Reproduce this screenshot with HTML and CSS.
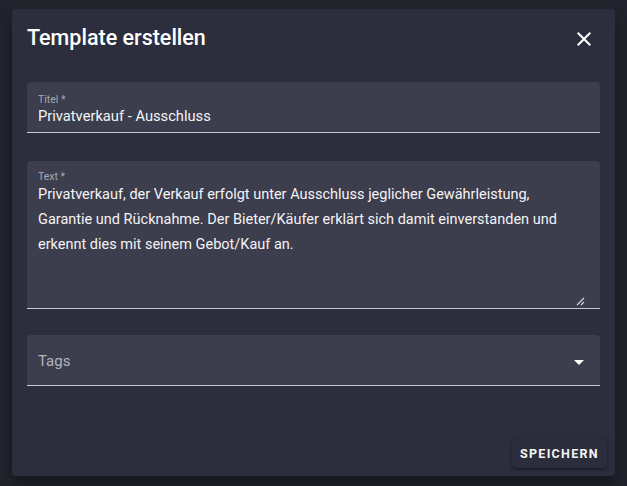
FILE: index.html
```html
<!DOCTYPE html>
<html lang="de">
<head>
<meta charset="utf-8">
<title>Template erstellen</title>
<link rel="stylesheet" href="styles.css">
</head>
<body>
<div class="backdrop">
  <div class="dialog">
    <div class="dialog-header">
      <h2 class="dialog-title">Template erstellen</h2>
      <button class="icon-btn close-btn" aria-label="Schließen">
        <svg viewBox="0 0 24 24" width="24" height="24"><path fill="#fff" d="M19 6.41 17.59 5 12 10.59 6.41 5 5 6.41 10.59 12 5 17.59 6.41 19 12 13.41 17.59 19 19 17.59 13.41 12z"/></svg>
      </button>
    </div>
    <div class="dialog-content">
      <div class="field field-title">
        <label class="field-label">Titel *</label>
        <div class="field-value">Privatverkauf - Ausschluss</div>
      </div>
      <div class="field field-text">
        <label class="field-label field-label-text">Text *</label>
        <div class="field-multiline">Privatverkauf, der Verkauf erfolgt unter Ausschluss jeglicher Gewährleistung, Garantie und Rücknahme. Der Bieter/Käufer erklärt sich damit einverstanden und erkennt dies mit seinem Gebot/Kauf an.</div>
        <svg class="resize-grip" viewBox="0 0 10 10" width="10" height="10"><path d="M9 2 2 9M9 6 6 9" stroke="#d8d8de" stroke-width="1.1" fill="none"/></svg>
      </div>
      <div class="field field-tags">
        <span class="tags-label">Tags</span>
        <svg class="dropdown-icon" viewBox="0 0 24 24" width="24" height="24"><path fill="#fff" d="M7 10l5 5 5-5z"/></svg>
      </div>
    </div>
    <div class="dialog-actions">
      <button class="save-btn">Speichern</button>
    </div>
  </div>
</div>
</body>
</html>
```
FILE: styles.css
```css
* { box-sizing: border-box; }
html, body { margin: 0; padding: 0; }
body {
  background: #22232c;
  font-family: Roboto, "Noto Sans", "Liberation Sans", sans-serif;
  width: 627px;
  height: 486px;
  overflow: hidden;
}
.backdrop {
  padding: 9px 0 0 12px;
}
.dialog {
  width: 603px;
  height: 467px;
  background: #2c2e3e;
  border-radius: 4px;
  box-shadow: 0 8px 14px rgba(0,0,0,0.35);
  display: flex;
  flex-direction: column;
  position: relative;
}
.dialog-header {
  display: flex;
  align-items: flex-start;
  justify-content: space-between;
  padding: 13px 19px 0 15px;
  height: 45px;
}
.dialog-title {
  margin: 0;
  font-size: 21.5px;
  font-weight: 500;
  line-height: 32px;
  color: #ffffff;
}
.icon-btn {
  background: none;
  border: 0;
  padding: 0;
  width: 24px;
  height: 24px;
  cursor: pointer;
}
.close-btn { margin-top: 5px; }
.icon-btn svg { display: block; }
.dialog-content {
  padding: 28px 15px 0 15px;
  display: flex;
  flex-direction: column;
}
.field {
  background: #3c3d4d;
  border-radius: 4px 4px 0 0;
  border-bottom: 1px solid #c8c9cf;
  padding: 0 11px;
  position: relative;
}
.field-title {
  height: 51px;
  padding-top: 11px;
}
.field-label {
  display: block;
  font-size: 10.5px;
  line-height: 13px;
  color: #a9aab4;
}
.field-value {
  font-size: 14.7px;
  line-height: 20px;
  color: #f4f4f6;
}
.field-text {
  margin-top: 28px;
  height: 148px;
  padding-top: 10px;
  padding-right: 20px;
}
.field-label-text {
  line-height: 12px;
}
.field-multiline {
  font-size: 14.5px;
  line-height: 25px;
  color: #f4f4f6;
  margin-top: -1px;
}
.resize-grip {
  position: absolute;
  right: 15px;
  bottom: 2px;
}
.field-tags {
  margin-top: 26px;
  height: 51px;
  display: flex;
  align-items: center;
  justify-content: space-between;
  padding-right: 9px;
}
.tags-label {
  font-size: 15px;
  line-height: 20px;
  color: #b4b5be;
  margin-top: 1px;
}
.dropdown-icon {
  display: block;
  margin-top: 3px;
}
.dialog-actions {
  margin-top: auto;
  display: flex;
  justify-content: flex-end;
  padding: 0 8px 8px 0;
}
.save-btn {
  height: 30px;
  width: 95px;
  background: #2b2d3c;
  border: 0;
  border-radius: 4px;
  box-shadow: 0 2px 3px rgba(0,0,0,0.35), 0 0 1px rgba(0,0,0,0.3);
  color: #f4f4f6;
  font-family: Roboto, "Noto Sans", "Liberation Sans", sans-serif;
  font-size: 12.5px;
  font-weight: 700;
  letter-spacing: 1.3px;
  text-transform: uppercase;
  padding: 0;
  cursor: pointer;
}
```
